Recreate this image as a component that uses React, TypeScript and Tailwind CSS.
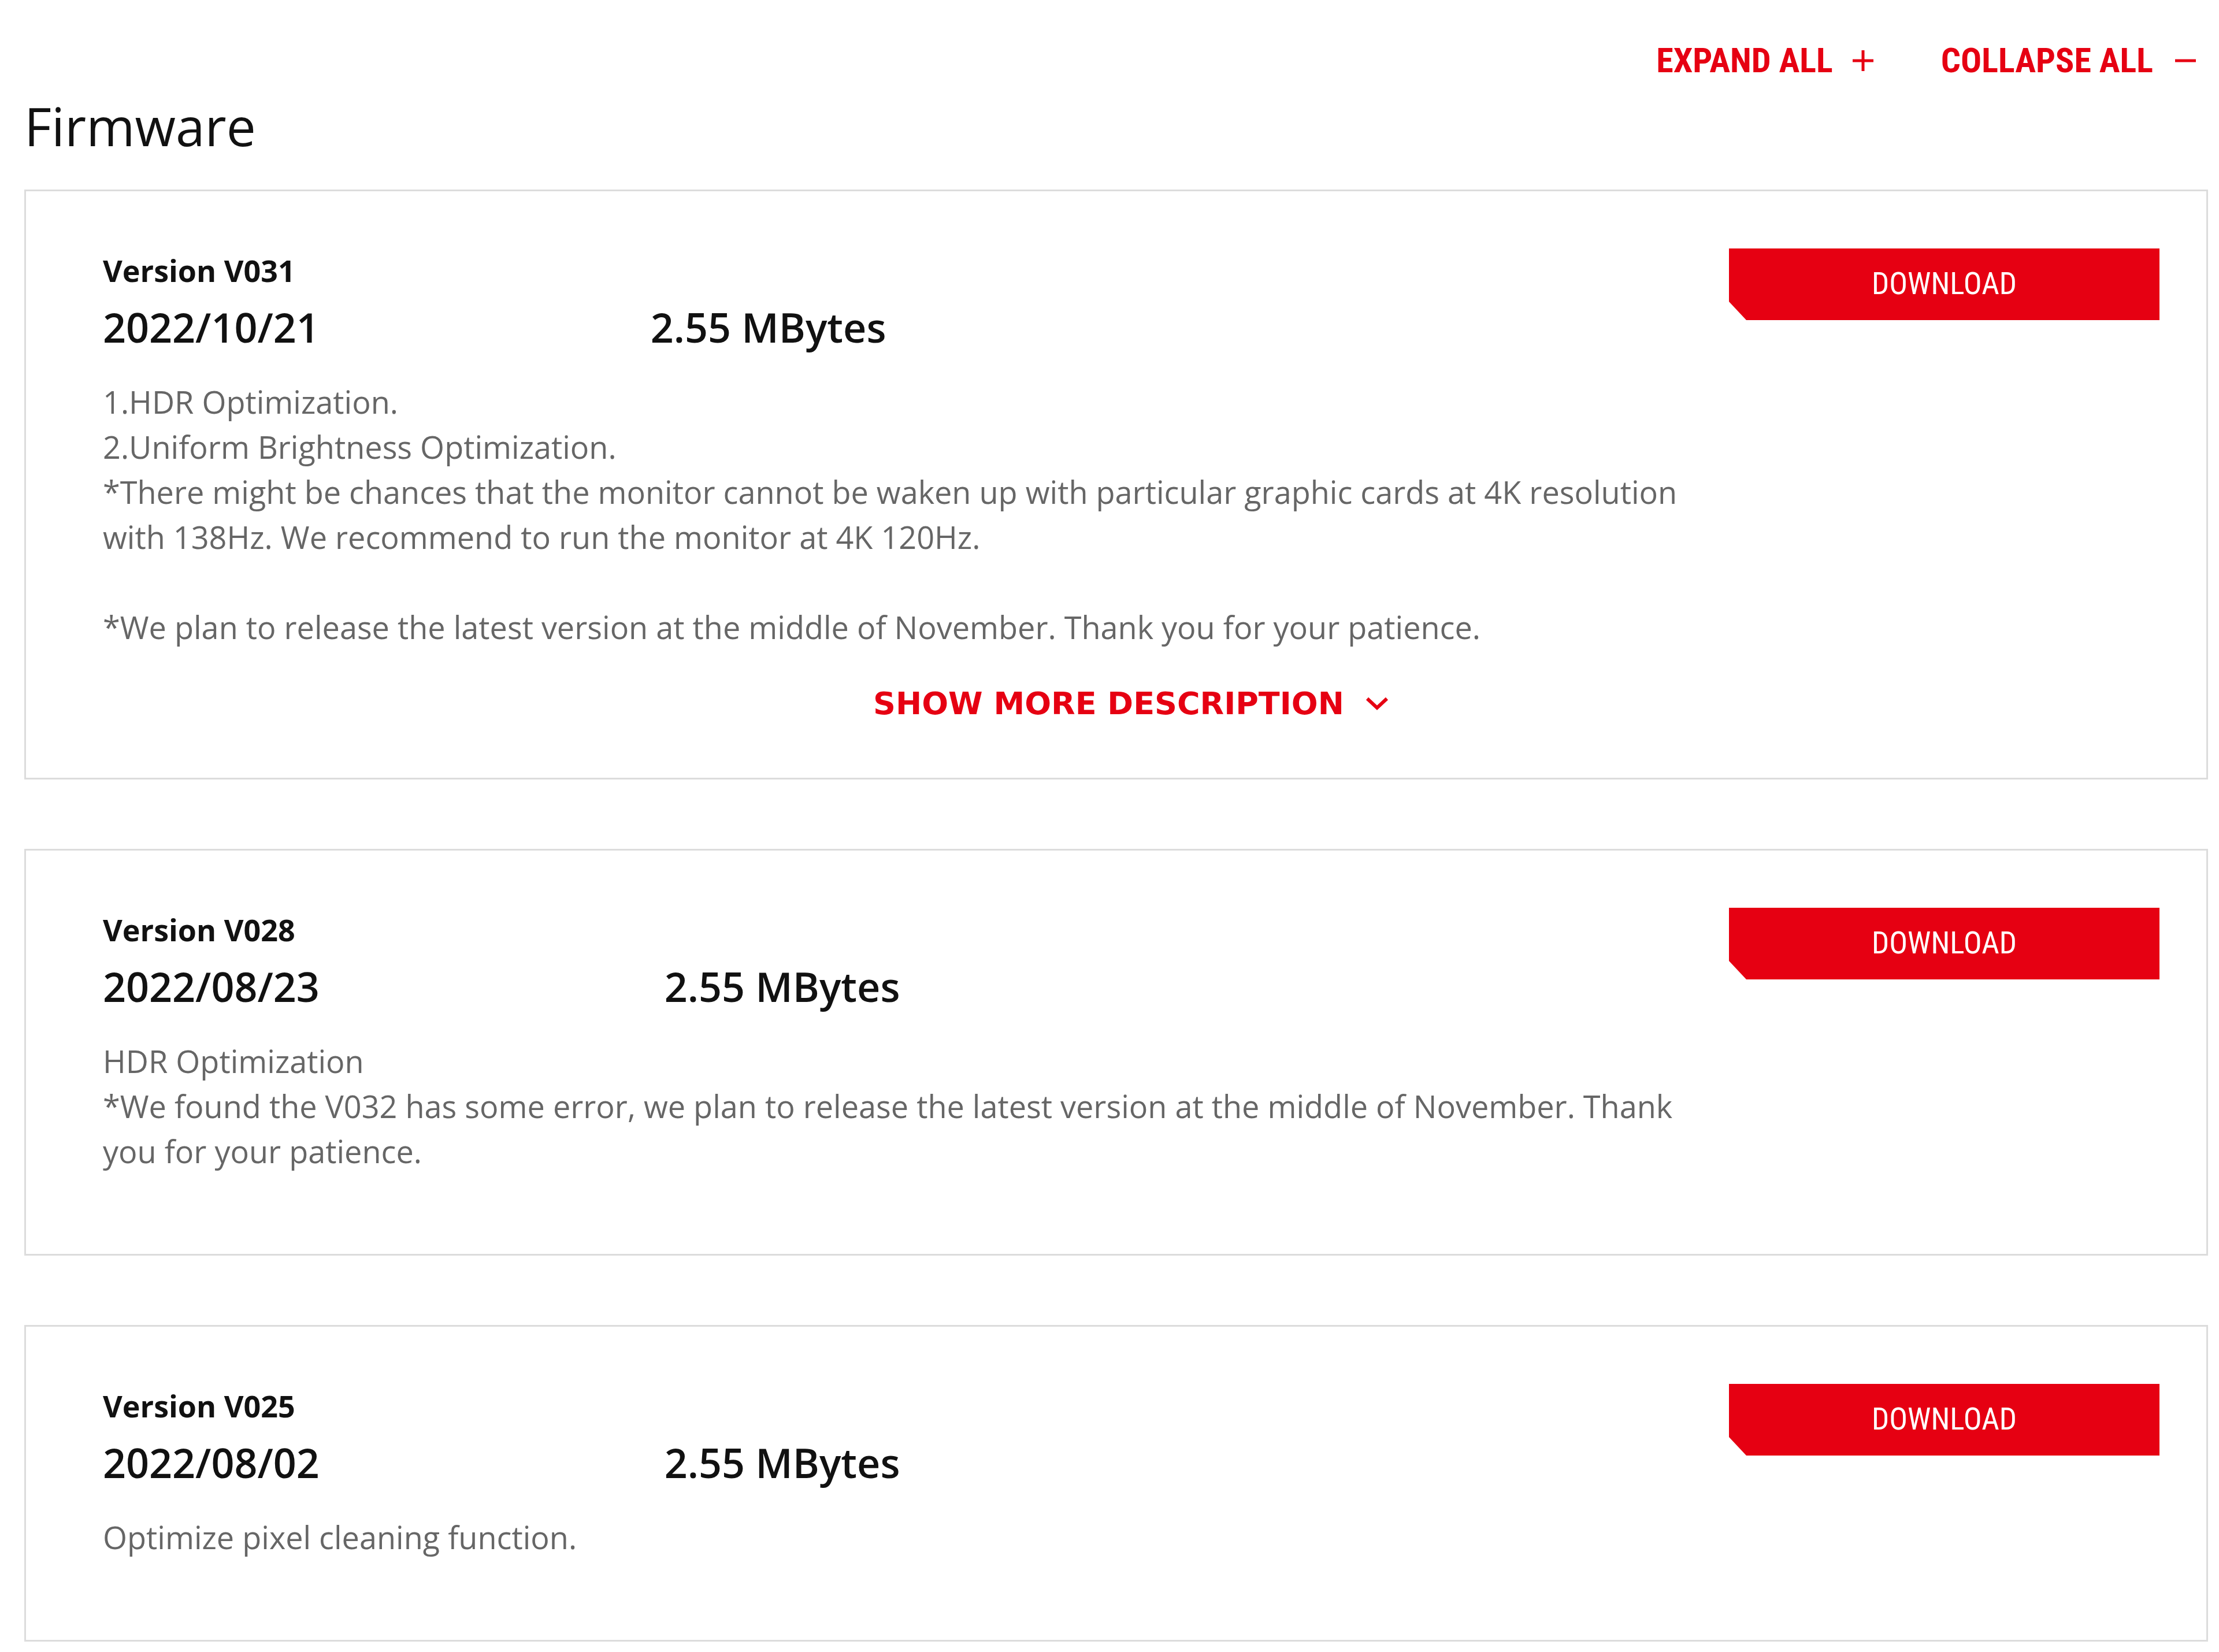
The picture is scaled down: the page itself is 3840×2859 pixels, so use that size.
interface FirmwareItem {
    version: string;
    date: string;
    size: string;
    sizeGap: string;
    lines: string[];
    showMore?: boolean;
}

const items: FirmwareItem[] = [
    {
        version: "Version V031",
        date: "2022/10/21",
        size: "2.55 MBytes",
        sizeGap: "ml-[573px]",
        lines: [
            "1.HDR Optimization.",
            "2.Uniform Brightness Optimization.",
            "*There might be chances that the monitor cannot be waken up with particular graphic cards at 4K resolution",
            "with 138Hz. We recommend to run the monitor at 4K 120Hz.",
            "",
            "*We plan to release the latest version at the middle of November. Thank you for your patience.",
        ],
        showMore: true,
    },
    {
        version: "Version V028",
        date: "2022/08/23",
        size: "2.55 MBytes",
        sizeGap: "ml-[597px]",
        lines: [
            "HDR Optimization",
            "*We found the V032 has some error, we plan to release the latest version at the middle of November. Thank",
            "you for your patience.",
        ],
    },
    {
        version: "Version V025",
        date: "2022/08/02",
        size: "2.55 MBytes",
        sizeGap: "ml-[597px]",
        lines: ["Optimize pixel cleaning function."],
    },
];

function PlusIcon() {
    return (
        <svg width="40" height="40" viewBox="0 0 40 40" fill="none">
            <path d="M20 2v36M2 20h36" stroke="#e60012" strokeWidth="5" />
        </svg>
    );
}

function MinusIcon() {
    return (
        <svg width="38" height="40" viewBox="0 0 38 40" fill="none">
            <path d="M1 20h36" stroke="#e60012" strokeWidth="5" />
        </svg>
    );
}

function ChevronDown() {
    return (
        <svg width="42" height="26" viewBox="0 0 42 26" fill="none">
            <path d="M4 5l17 16L38 5" stroke="#e60012" strokeWidth="6" />
        </svg>
    );
}

function FirmwareCard({ item }: { item: FirmwareItem }) {
    return (
        <div
            className={`flex flex-col border-[3px] border-[#dcdcdc] pl-[133px] pr-[81px] pt-[97px] ${
                item.showMore ? "pb-[89px]" : "pb-[139px]"
            }`}
        >
            <div className="flex items-start">
                <div className="flex-1 min-w-0">
                    <p className="text-[52px] font-bold leading-[80px] text-[#111]">
                        {item.version}
                    </p>
                    <div className="flex items-center text-[70px] font-semibold leading-[116px] text-[#111]">
                        <span>{item.date}</span>
                        <span className={item.sizeGap}>{item.size}</span>
                    </div>
                    <div className="mt-[32px] text-[54px] leading-[78px] text-[#666]">
                        {item.lines.map((line, i) =>
                            line ? (
                                <p key={i} className="whitespace-nowrap">
                                    {line}
                                </p>
                            ) : (
                                <div key={i} className="h-[78px]" />
                            )
                        )}
                    </div>
                </div>
                <button className="mt-[2px] flex h-[124px] w-[745px] shrink-0 items-center justify-center bg-[#e60012] font-['Liberation_Sans_Narrow','Roboto_Condensed',Roboto,sans-serif] text-[53px] text-white [clip-path:polygon(0_0,100%_0,100%_100%,30px_100%,0_calc(100%-32px))]">
                    DOWNLOAD
                </button>
            </div>
            {item.showMore && (
                <div className="mt-[53px] flex h-[80px] items-center justify-center gap-[36px]">
                    <span className="font-['DejaVu_Sans',sans-serif] text-[54px] font-bold text-[#e60012]">
                        SHOW MORE DESCRIPTION
                    </span>
                    <ChevronDown />
                </div>
            )}
        </div>
    );
}

export default function App() {
    return (
        <div className="min-h-screen bg-white font-['Open_Sans',sans-serif]">
            <div className="pl-[42px] pr-[19px] pt-[65px]">
                <div className="flex h-[80px] items-center justify-end gap-[115px] pr-[20px] font-['Liberation_Sans_Narrow','Roboto_Condensed',Roboto,sans-serif] text-[60px] font-bold text-[#e60012]">
                    <button className="flex items-center gap-[32px]">
                        <span>EXPAND ALL</span>
                        <PlusIcon />
                    </button>
                    <button className="flex items-center gap-[37px]">
                        <span>COLLAPSE ALL</span>
                        <MinusIcon />
                    </button>
                </div>
                <h2 className="mt-[13px] text-[91px] leading-[120px] text-[#111]">
                    Firmware
                </h2>
                <div className="mt-[50px] flex flex-col gap-[120px]">
                    {items.map((item) => (
                        <FirmwareCard key={item.version} item={item} />
                    ))}
                </div>
            </div>
        </div>
    );
}
